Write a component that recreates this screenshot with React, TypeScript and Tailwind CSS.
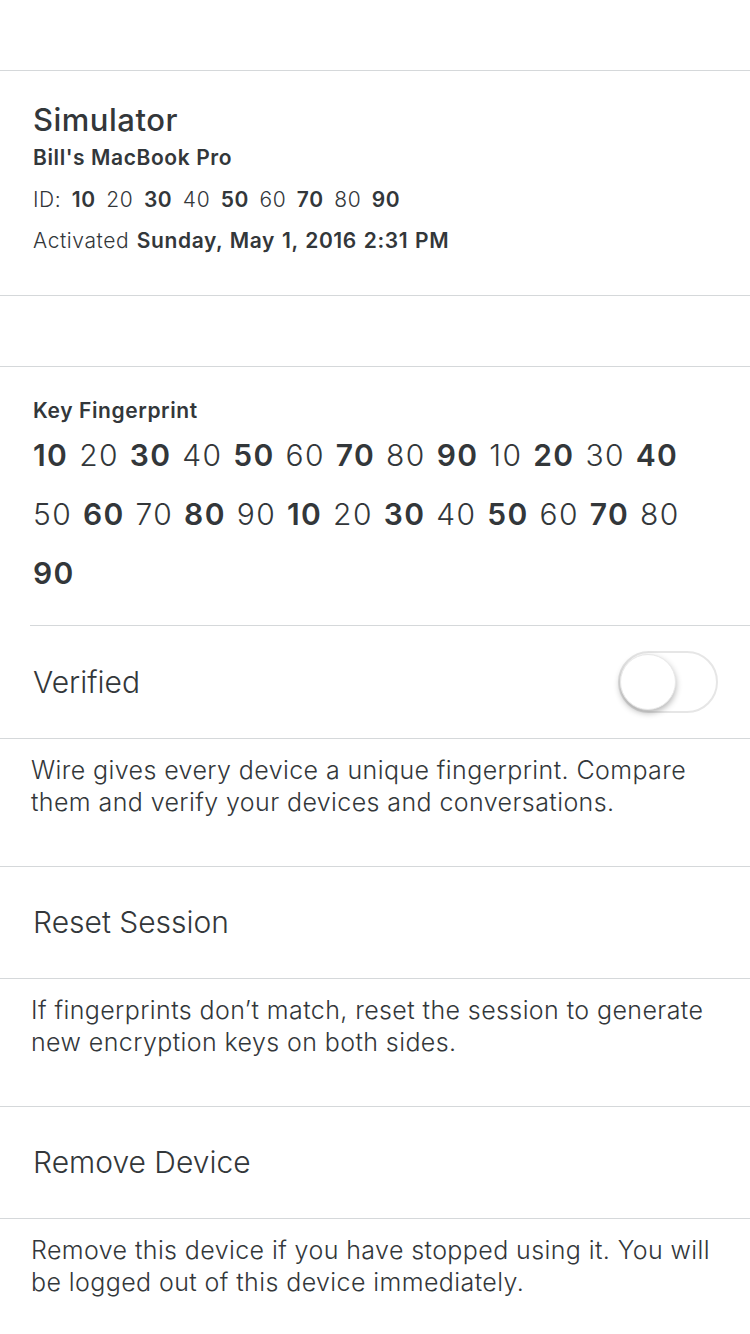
import React from "react";

const font = { fontFamily: "Inter, 'Noto Sans', sans-serif" };

function Num({ n, b }: { n: string; b: boolean }) {
  return <span className={b ? "font-semibold" : "font-light"}>{n}</span>;
}

export default function App() {
  const fp = ["10","20","30","40","50","60","70","80","90","10","20","30","40","50","60","70","80","90","10","20","30","40","50","60","70","80","90"];
  const id = ["10","20","30","40","50","60","70","80","90"];
  return (
    <div className="w-[750px] h-[1334px] bg-white text-[#33373a] overflow-hidden" style={font}>
      <div className="h-[71px] border-b border-[#d5d8da]" />
      <div className="h-[225px] border-b border-[#d5d8da] pl-[33px] pt-[31px]">
        <div className="text-[31px] leading-[36px] font-medium tracking-[0.5px]">Simulator</div>
        <div className="text-[21px] leading-[26px] font-semibold mt-[7px] tracking-[0.6px]">Bill's MacBook Pro</div>
        <div className="text-[21px] leading-[26px] mt-[16px] font-light tracking-[0.6px] [word-spacing:4px]">
          ID:{" "}
          {id.map((n, i) => (
            <React.Fragment key={i}>
              <Num n={n} b={i % 2 === 0} />
              {i < id.length - 1 ? " " : ""}
            </React.Fragment>
          ))}
        </div>
        <div className="text-[21px] leading-[26px] mt-[15px] tracking-[0.6px] [word-spacing:1px]">
          <span className="font-light">Activated </span>
          <span className="font-semibold">Sunday, May 1, 2016 2:31 PM</span>
        </div>
      </div>
      <div className="h-[71px] border-b border-[#d5d8da]" />
      <div className="pl-[30px]">
        <div className="h-[259px] border-b border-[#d5d8da] pt-[30px] pl-[3px] pr-[40px]">
          <div className="text-[21px] leading-[28px] font-semibold tracking-[0.6px]">Key Fingerprint</div>
          <div className="text-[30px] leading-[59px] mt-[1px] tracking-[1.4px] [word-spacing:1px]">
            {fp.map((n, i) => (
              <React.Fragment key={i}>
                <Num n={n} b={i % 2 === 0} />
                {i < fp.length - 1 ? " " : ""}
              </React.Fragment>
            ))}
          </div>
        </div>
      </div>
      <div className="h-[113px] border-b border-[#d5d8da] flex items-center justify-between pl-[33px] pr-[32px]">
        <span className="text-[30px] font-light">Verified</span>
        <div className="relative w-[100px] h-[62px] rounded-full border-[2px] border-[#e6e6e6] bg-white">
          <div className="absolute left-[0px] top-[1px] w-[56px] h-[56px] rounded-full bg-white shadow-[0_3px_6px_rgba(0,0,0,0.3)] border border-[#e8e8e8]" />
        </div>
      </div>
      <div className="h-[128px] border-b border-[#d5d8da] pl-[31px] pr-[30px] pt-[15px] text-[25px] leading-[32px] font-light tracking-[0.4px]">
        Wire gives every device a unique fingerprint. Compare them and verify your devices and conversations.
      </div>
      <div className="h-[112px] border-b border-[#d5d8da] flex items-center pl-[33px]">
        <span className="text-[30px] font-light">Reset Session</span>
      </div>
      <div className="h-[128px] border-b border-[#d5d8da] pl-[31px] pr-[30px] pt-[15px] text-[25px] leading-[32px] font-light tracking-[0.4px]">
        If fingerprints don’t match, reset the session to generate new encryption keys on both sides.
      </div>
      <div className="h-[112px] border-b border-[#d5d8da] flex items-center pl-[33px]">
        <span className="text-[30px] font-light">Remove Device</span>
      </div>
      <div className="pl-[31px] pr-[30px] pt-[15px] text-[25px] leading-[32px] font-light tracking-[0.4px]">
        Remove this device if you have stopped using it. You will be logged out of this device immediately.
      </div>
    </div>
  );
}
